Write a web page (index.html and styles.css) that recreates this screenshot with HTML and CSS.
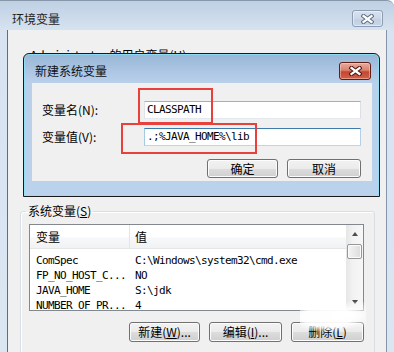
FILE: index.html
```html
<!DOCTYPE html>
<html lang="zh-CN">
<head>
<meta charset="utf-8">
<title>环境变量</title>
<link rel="stylesheet" href="styles.css">
</head>
<body>
<div class="screen">
  <div class="win">
    <div class="titlebar">
      <span class="title">环境变量</span>
      <span class="close close-inactive">
        <svg width="13" height="10" viewBox="0 0 13 10"><path d="M2.5 2 L10.5 8 M10.5 2 L2.5 8" stroke="#5e6f86" stroke-width="4.2" stroke-linecap="square" fill="none"/><path d="M2.5 2 L10.5 8 M10.5 2 L2.5 8" stroke="#ffffff" stroke-width="2.2" stroke-linecap="square" fill="none"/></svg>
      </span>
    </div>
    <div class="client">
      <div class="user-label">Administrator 的用户变量(U)</div>
      <fieldset class="group">
        <legend>系统变量(<u>S</u>)</legend>
        <div class="listview">
          <div class="lv-main">
            <div class="lv-head"><span class="c1">变量</span><span class="c2">值</span></div>
            <div class="lv-body">
              <div class="lv-row"><span class="c1 mono">ComSpec</span><span class="c2 mono">C:\Windows\system32\cmd.exe</span></div>
              <div class="lv-row"><span class="c1 mono">FP_NO_HOST_C...</span><span class="c2 mono">NO</span></div>
              <div class="lv-row"><span class="c1 mono">JAVA_HOME</span><span class="c2 mono">S:\jdk</span></div>
              <div class="lv-row"><span class="c1 mono">NUMBER_OF_PR...</span><span class="c2 mono">4</span></div>
            </div>
          </div>
          <div class="scrollbar">
            <div class="sb-btn"><span class="arrow-up"></span></div>
            <div class="sb-track"><div class="sb-thumb"></div></div>
            <div class="sb-btn"><span class="arrow-down"></span></div>
          </div>
        </div>
        <div class="group-buttons">
          <button class="btn w71">新建(<u>W</u>)...</button>
          <button class="btn w73">编辑(<u>I</u>)...</button>
          <button class="btn w73">删除(<u>L</u>)</button>
        </div>
      </fieldset>
    </div>
  </div>

  <div class="dialog">
    <div class="dlg-titlebar">
      <span class="dlg-title">新建系统变量</span>
      <span class="close close-red">
        <svg width="13" height="10" viewBox="0 0 13 10"><path d="M2.5 2 L10.5 8 M10.5 2 L2.5 8" stroke="#4a1610" stroke-width="4.2" stroke-linecap="square" fill="none"/><path d="M2.5 2 L10.5 8 M10.5 2 L2.5 8" stroke="#ffffff" stroke-width="2.2" stroke-linecap="square" fill="none"/></svg>
      </span>
    </div>
    <div class="dlg-client">
      <div class="form">
        <label class="lbl">变量名(N):</label>
        <div class="input mono">CLASSPATH</div>
        <label class="lbl">变量值(V):</label>
        <div class="input input-focus mono">.;%JAVA_HOME%\lib</div>
      </div>
      <div class="dlg-buttons">
        <button class="btn ok">确定</button>
        <button class="btn cancel">取消</button>
      </div>
    </div>
  </div>

  <div class="mark mark-name"></div>
  <div class="mark mark-value"></div>
  <div class="blot"></div>
</div>
</body>
</html>
```
FILE: styles.css
```css
* { box-sizing: border-box; }

body {
  margin: 0;
  background: #ffffff;
  font: 12px/14px "Noto Sans CJK SC", "Noto Sans", sans-serif;
  color: #000;
}

.mono {
  font-family: "DejaVu Sans Mono", "Liberation Mono", monospace;
  font-size: 11px;
  letter-spacing: -0.62px;
}

.screen {
  position: relative;
  width: 394px;
  height: 352px;
  overflow: hidden;
}

/* ---------- outer window ---------- */
.win {
  width: 394px;
  height: 352px;
  display: flex;
  flex-direction: column;
  background: linear-gradient(#bfd0e4 0, #cddbeb 18px, #d7e3f1 30px, #dbe6f3 100%);
  border-top: 1px solid #8796a8;
  border-radius: 0 7px 0 0;
}

.titlebar {
  height: 29px;
  padding-top: 6px;
  display: flex;
  align-items: center;
  justify-content: space-between;
  flex: none;
}

.title {
  padding-left: 12px;
  color: #1e1e1e;
}

.close {
  width: 31px;
  height: 17px;
  border-radius: 3px;
  display: flex;
  align-items: center;
  justify-content: center;
}

.close-inactive {
  margin-right: 11px;
  border: 1px solid #8d9cb2;
  background: linear-gradient(#d8e2ee 0, #ccd8e7 50%, #c0cfe2 51%, #c9d6e7 100%);
  box-shadow: inset 0 0 0 1px rgba(255,255,255,.45);
}

.client {
  flex: 1;
  margin: 0 7px 0 7px;
  border-left: 1px solid #5f6d7e;
  border-right: 1px solid #8594a6;
  background: #f0f0f0;
  overflow: hidden;
}

.user-label {
  margin-top: 18px;
  padding-left: 22px;
}

.group {
  margin: 142px 11px 0 12px;
  padding: 0 0 15px 0;
  border: 1px solid #d5dfe5;
  border-radius: 3px;
  box-shadow: inset 1px 1px 0 #ffffff;
}

.group legend {
  margin-left: 5px;
  padding: 0 2px;
  line-height: 14px;
}

u { text-decoration: underline; }

.listview {
  margin: 6px 0 0 8px;
  width: 335px;
  height: 87px;
  border: 1px solid #828790;
  background: #ffffff;
  display: flex;
}

.lv-main {
  flex: 1;
  min-width: 0;
  overflow: hidden;
}

.lv-head {
  height: 24px;
  display: flex;
  align-items: center;
  padding-top: 1px;
  border-bottom: 1px solid #e5e5e5;
  background: linear-gradient(#ffffff 0, #ffffff 50%, #f7f8fa 55%, #f1f2f4 100%);
}

.lv-head .c1 {
  height: 23px;
  margin-top: -1px;
  display: flex;
  align-items: center;
  border-right: 1px solid #e3e5e8;
}

.c1 {
  width: 100px;
  padding-left: 6px;
  flex: none;
  white-space: nowrap;
  overflow: hidden;
}

.c2 {
  padding-left: 5px;
  white-space: nowrap;
}

.lv-body { padding-top: 4px; }

.lv-row {
  height: 15px;
  line-height: 15px;
  display: flex;
}

.scrollbar {
  width: 17px;
  flex: none;
  display: flex;
  flex-direction: column;
  background: linear-gradient(to right, #e6e6e6, #f2f2f2 40%, #f7f7f7);
}

.sb-btn {
  height: 17px;
  display: flex;
  align-items: center;
  justify-content: center;
}

.arrow-up, .arrow-down {
  width: 0;
  height: 0;
  border-left: 3.5px solid transparent;
  border-right: 3.5px solid transparent;
}
.arrow-up { border-bottom: 4px solid #4d4d4d; }
.arrow-down { border-top: 4px solid #4d4d4d; }

.sb-track {
  flex: 1;
  padding: 2px 1px 0 1px;
}

.sb-thumb {
  height: 15px;
  border: 1px solid #979797;
  border-radius: 2px;
  background: linear-gradient(to right, #f4f4f4, #e8e8e8 50%, #dcdcdc);
  box-shadow: inset 0 0 0 1px #fbfbfb;
}

.group-buttons {
  margin-top: 11px;
  padding-right: 10px;
  display: flex;
  justify-content: flex-end;
  gap: 9px;
}

.btn {
  height: 20px;
  padding: 0;
  border: 1px solid #707070;
  border-radius: 3px;
  background: linear-gradient(#f2f2f2 0, #ebebeb 50%, #dddddd 51%, #cfcfcf 100%);
  box-shadow: inset 0 0 0 1px #fcfcfc;
  font: 12px/14px "Noto Sans CJK SC", "Noto Sans", sans-serif;
  color: #000;
}

.w71 { width: 71px; }
.w73 { width: 73px; }

/* ---------- inner dialog ---------- */
.dialog {
  position: absolute;
  left: 23px;
  top: 53px;
  width: 357px;
  height: 144px;
  border: 1px solid #1a1a1a;
  border-radius: 6px 6px 0 0;
  padding: 0 7px 15px 8px;
  display: flex;
  flex-direction: column;
  background: linear-gradient(#98b6d7 0, #aac4e2 15px, #b9d0ea 29px, #bad2ec 100%);
  box-shadow: inset 0 0 0 1px rgba(140, 225, 248, .85);
}

.dlg-titlebar {
  height: 29px;
  padding-top: 5px;
  display: flex;
  align-items: center;
  justify-content: space-between;
  flex: none;
}

.dlg-title {
  margin-left: 3px;
  color: #111;
}

.close-red {
  width: 32px;
  height: 18px;
  margin-right: 1px;
  border: 1px solid #5d1f17;
  background: linear-gradient(#e9ab9e 0, #d98270 45%, #c4472f 55%, #cf6148 100%);
  box-shadow: inset 0 0 0 1px rgba(255, 210, 200, .5);
}

.dlg-client {
  flex: 1;
  background: #f0f0f0;
  padding: 18px 11px 0 10px;
}

.form {
  display: grid;
  grid-template-columns: 102px 217px;
  grid-auto-rows: 18px;
  row-gap: 9px;
  align-items: center;
}

.lbl { line-height: 14px; }

.input {
  height: 18px;
  background: #fff;
  border: 1px solid;
  border-color: #abadb3 #dbdfe6 #e3e9ef #e2e3ea;
  padding-left: 2px;
  line-height: 16px;
  white-space: nowrap;
}

.input-focus {
  border-color: #3d7bad #b5cfe7 #b7d9ed #a4c9e3;
}

.dlg-buttons {
  margin-top: 13px;
  display: flex;
  justify-content: flex-end;
  gap: 9px;
}

.dlg-buttons .btn { height: 19px; }
.ok { width: 71px; }
.cancel { width: 74px; }

/* ---------- annotations ---------- */
.mark {
  position: absolute;
  border: 2px solid #e8403b;
}

.mark-name {
  left: 138px;
  top: 88px;
  width: 75px;
  height: 36px;
}

.mark-value {
  left: 121px;
  top: 123px;
  width: 136px;
  height: 31px;
}

.blot {
  position: absolute;
  left: 300px;
  top: 302px;
  width: 66px;
  height: 30px;
  background:
    radial-gradient(ellipse at 40% 50%, rgba(255,255,255,.95) 0, rgba(255,255,255,.9) 45%, rgba(255,255,255,0) 70%),
    radial-gradient(ellipse at 75% 40%, rgba(255,255,255,.9) 0, rgba(255,255,255,0) 60%);
}
```
